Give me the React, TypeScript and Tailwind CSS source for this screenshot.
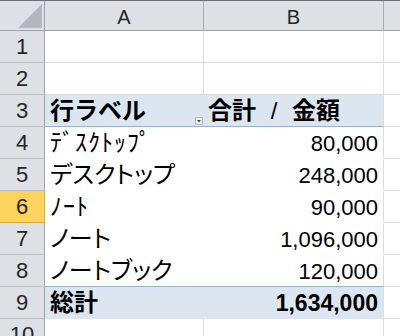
import React from "react";

const rowH = "h-[32px]";

function RowHeader({ n, active }: { n: number; active?: boolean }) {
  return (
    <div
      className={
        "flex items-end justify-center border-r border-b pb-[2px] text-[22px] leading-none text-[#262626] " +
        (active
          ? "bg-[#fcd35c] border-r-[#e0b040] border-b-[#e8a838]"
          : "bg-[#dde0e5] border-r-[#9da3ab] border-b-[#bcc0c6]")
      }
    >
      <span className="pb-[2px]">{n}</span>
    </div>
  );
}

type Row = {
  n: number;
  a?: string;
  b?: string;
  kind: "plain" | "head" | "data" | "total";
  active?: boolean;
  nextTotal?: boolean;
  half?: boolean;
};

const rows: Row[] = [
  { n: 1, kind: "plain" },
  { n: 2, kind: "plain" },
  { n: 3, a: "行ラベル", b: "合計 / 金額", kind: "head" },
  { n: 4, a: "ﾃﾞｽｸﾄｯﾌﾟ", b: "80,000", kind: "data", half: true },
  { n: 5, a: "デスクトップ", b: "248,000", kind: "data" },
  { n: 6, a: "ﾉｰﾄ", b: "90,000", kind: "data", active: true, half: true },
  { n: 7, a: "ノート", b: "1,096,000", kind: "data" },
  { n: 8, a: "ノートブック", b: "120,000", kind: "data", nextTotal: true },
  { n: 9, a: "総計", b: "1,634,000", kind: "total" },
  { n: 10, kind: "plain" },
];

function DataRow({ r }: { r: Row }) {
  let aCls = "";
  let bCls = "";
  if (r.kind === "plain") {
    aCls = "bg-white border-r border-b border-[#dadcdd]";
    bCls = "bg-white border-r border-b border-[#dadcdd]";
  } else if (r.kind === "head") {
    aCls = "bg-[#dce6f1] border-b border-[#95b3d7] font-bold";
    bCls = "bg-[#dce6f1] border-b border-r border-b-[#95b3d7] border-r-[#dadcdd] font-bold";
  } else if (r.kind === "data") {
    aCls = "bg-white " + (r.nextTotal ? "border-b border-[#95b3d7]" : "border-b border-white");
    aCls += r.half ? " tracking-[1px]" : " [font-feature-settings:'palt']";
    bCls = "bg-white border-r border-r-[#dadcdd] " + (r.nextTotal ? "border-b border-b-[#95b3d7]" : "border-b border-b-white");
  } else {
    aCls = "bg-[#dce6f1] border-b border-[#dce6f1] font-bold";
    bCls = "bg-[#dce6f1] border-b border-r border-b-[#dce6f1] border-r-[#dadcdd] font-bold text-[23px]";
  }
  return (
    <div className={"grid grid-cols-[45px_159px_180px_16px] " + rowH}>
      <RowHeader n={r.n} active={r.active} />
      <div className={"relative flex items-end pl-[5px] pb-[2px] text-[24px] leading-none text-black " + aCls}>
        <span className="pb-[1px] whitespace-nowrap">{r.a}</span>
        {r.kind === "head" && (
          <div className="absolute right-[1px] bottom-[1px] w-[8px] h-[8px] border border-[#b7bcc3] bg-[#f4f5f7] flex items-center justify-center">
            <svg width="4" height="3" viewBox="0 0 4 3">
              <path d="M0 0 L4 0 L2 2.5 Z" fill="#444" />
            </svg>
          </div>
        )}
      </div>
      <div
        className={
          "flex items-end pb-[2px] leading-none text-black whitespace-nowrap " +
          (r.kind === "head"
            ? "justify-start pl-[4px] text-[24px] [word-spacing:8px] "
            : r.kind === "total"
            ? "justify-end pr-[5px] "
            : "justify-end pr-[5px] text-[22px] ") +
          bCls
        }
      >
        {r.kind === "head" ? (
          <span className="pb-[1px]">
            合計 <span className="font-normal">/</span> 金額
          </span>
        ) : (
          <span className="pb-[1px]">{r.b}</span>
        )}
      </div>
      <div className="bg-white border-b border-[#dadcdd]" />
    </div>
  );
}

export default function App() {
  return (
    <div className="w-[400px] h-[336px] overflow-hidden bg-white font-['Liberation_Sans','Noto_Sans_CJK_JP',sans-serif]">
      <div className="h-px bg-[#6d6f73]" />
      <div className="grid grid-cols-[45px_159px_180px_16px] h-[30px] bg-[#dde0e5] border-b border-[#9da3ab]">
        <div className="border-r border-[#9da3ab] relative">
          <svg className="absolute left-0 top-0" width="44" height="29" viewBox="0 0 44 29">
            <path d="M18 27 L42 3 L42 27 Z" fill="#b4b8be" />
          </svg>
        </div>
        <div className="border-r border-[#a9aeb5] flex items-end justify-center pb-[3px] text-[20px] leading-none text-[#262626]">
          A
        </div>
        <div className="border-r border-[#a9aeb5] flex items-end justify-center pb-[3px] text-[20px] leading-none text-[#262626]">
          B
        </div>
        <div />
      </div>
      {rows.map((r) => (
        <DataRow key={r.n} r={r} />
      ))}
    </div>
  );
}
